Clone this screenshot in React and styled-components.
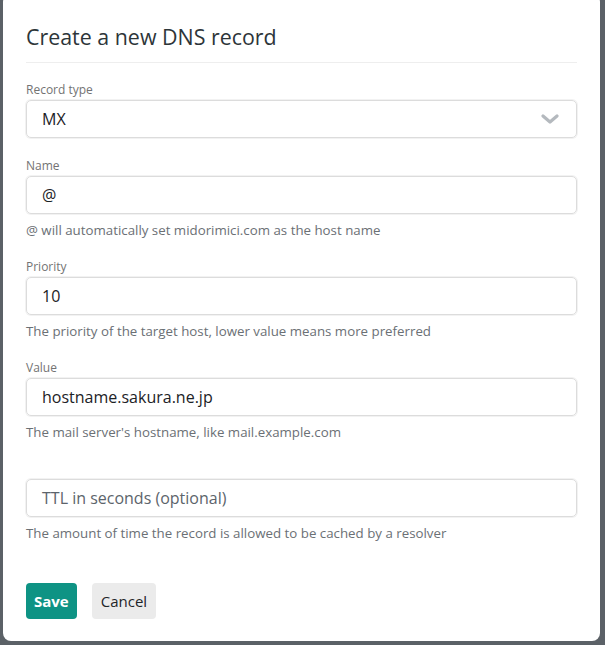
import React from "react";
import styled, { createGlobalStyle } from "styled-components";

const GlobalStyle = createGlobalStyle`
  html, body {
    margin: 0;
    padding: 0;
    background: #5b6167;
    font-family: "Open Sans", "Noto Sans", sans-serif;
  }
`;

const fields = [
  { label: "Name", value: "@", help: "@ will automatically set midorimici.com as the host name" },
  { label: "Priority", value: "10", help: "The priority of the target host, lower value means more preferred" },
  { label: "Value", value: "hostname.sakura.ne.jp", help: "The mail server's hostname, like mail.example.com" },
  { label: "", placeholder: "TTL in seconds (optional)", help: "The amount of time the record is allowed to be cached by a resolver" },
];

const App = () => {
  return (
    <Page>
      <GlobalStyle />
      <Modal>
        <Title>Create a new DNS record</Title>
        <Form>
          <Field>
            <Label>Record type</Label>
            <SelectBox>
              <span>MX</span>
              <svg width="18" height="12" viewBox="0 0 18 12">
                <path d="M2 3 L9 9 L16 3" fill="none" stroke="#b4b9be" strokeWidth="3.2" strokeLinecap="round" strokeLinejoin="round" />
              </svg>
            </SelectBox>
          </Field>
          {fields.map((f) => (
            <Field key={f.help}>
              <Label>{f.label}</Label>
              <Input $placeholder={!f.value}>{f.value || f.placeholder}</Input>
              <Help>{f.help}</Help>
            </Field>
          ))}
        </Form>
        <Actions>
          <SaveButton>Save</SaveButton>
          <CancelButton>Cancel</CancelButton>
        </Actions>
      </Modal>
    </Page>
  );
};

const Page = styled.div`
  width: 605px;
  height: 645px;
  padding: 0 5px 0 3px;
  box-sizing: border-box;
  overflow: hidden;
`;
const Modal = styled.div`
  margin-top: -6px;
  height: 647px;
  box-sizing: border-box;
  background: #ffffff;
  border-radius: 8px;
  padding: 29px 23px 0 23px;
`;
const Title = styled.h2`
  margin: 0;
  font-size: 21.4px;
  font-weight: 400;
  line-height: 28px;
  color: #2d3539;
  padding-bottom: 11px;
  border-bottom: 1px solid #eeeeee;
`;
const Form = styled.div`
  display: flex;
  flex-direction: column;
  gap: 18px;
  margin-top: 18px;
`;
const Field = styled.div`
  display: flex;
  flex-direction: column;
`;
const Label = styled.label`
  font-size: 12px;
  line-height: 18px;
  height: 18px;
  color: #737373;
  margin-bottom: 1px;
`;
const boxStyles = `
  height: 38px;
  box-sizing: border-box;
  border: 1px solid #dcdcdc;
  border-radius: 5px;
  box-shadow: 0 0 0 1px #f2f2f2;
  padding: 0 15px;
  display: flex;
  align-items: center;
  font-size: 16px;
`;
const SelectBox = styled.div`
  ${boxStyles}
  margin-bottom: 1px;
  justify-content: space-between;
  color: #1c2226;
  svg {
    margin-right: 2px;
  }
`;
const Input = styled.div`
  ${boxStyles}
  color: ${(p) => (p.$placeholder ? "#5c646b" : "#1c2226")};
`;
const Help = styled.p`
  margin: 7px 0 0;
  font-size: 13.3px;
  line-height: 19px;
  color: #6b7075;
`;
const Actions = styled.div`
  display: flex;
  gap: 15px;
  margin-top: 40px;
`;
const Button = styled.button`
  height: 36px;
  border: none;
  border-radius: 4px;
  font-family: inherit;
  font-size: 15px;
  padding: 0 8px;
`;
const SaveButton = styled(Button)`
  background: #0e9384;
  color: #ffffff;
  font-weight: 700;
`;
const CancelButton = styled(Button)`
  background: #ebebeb;
  color: #1f2529;
  padding: 0 9px;
`;

export default App;
